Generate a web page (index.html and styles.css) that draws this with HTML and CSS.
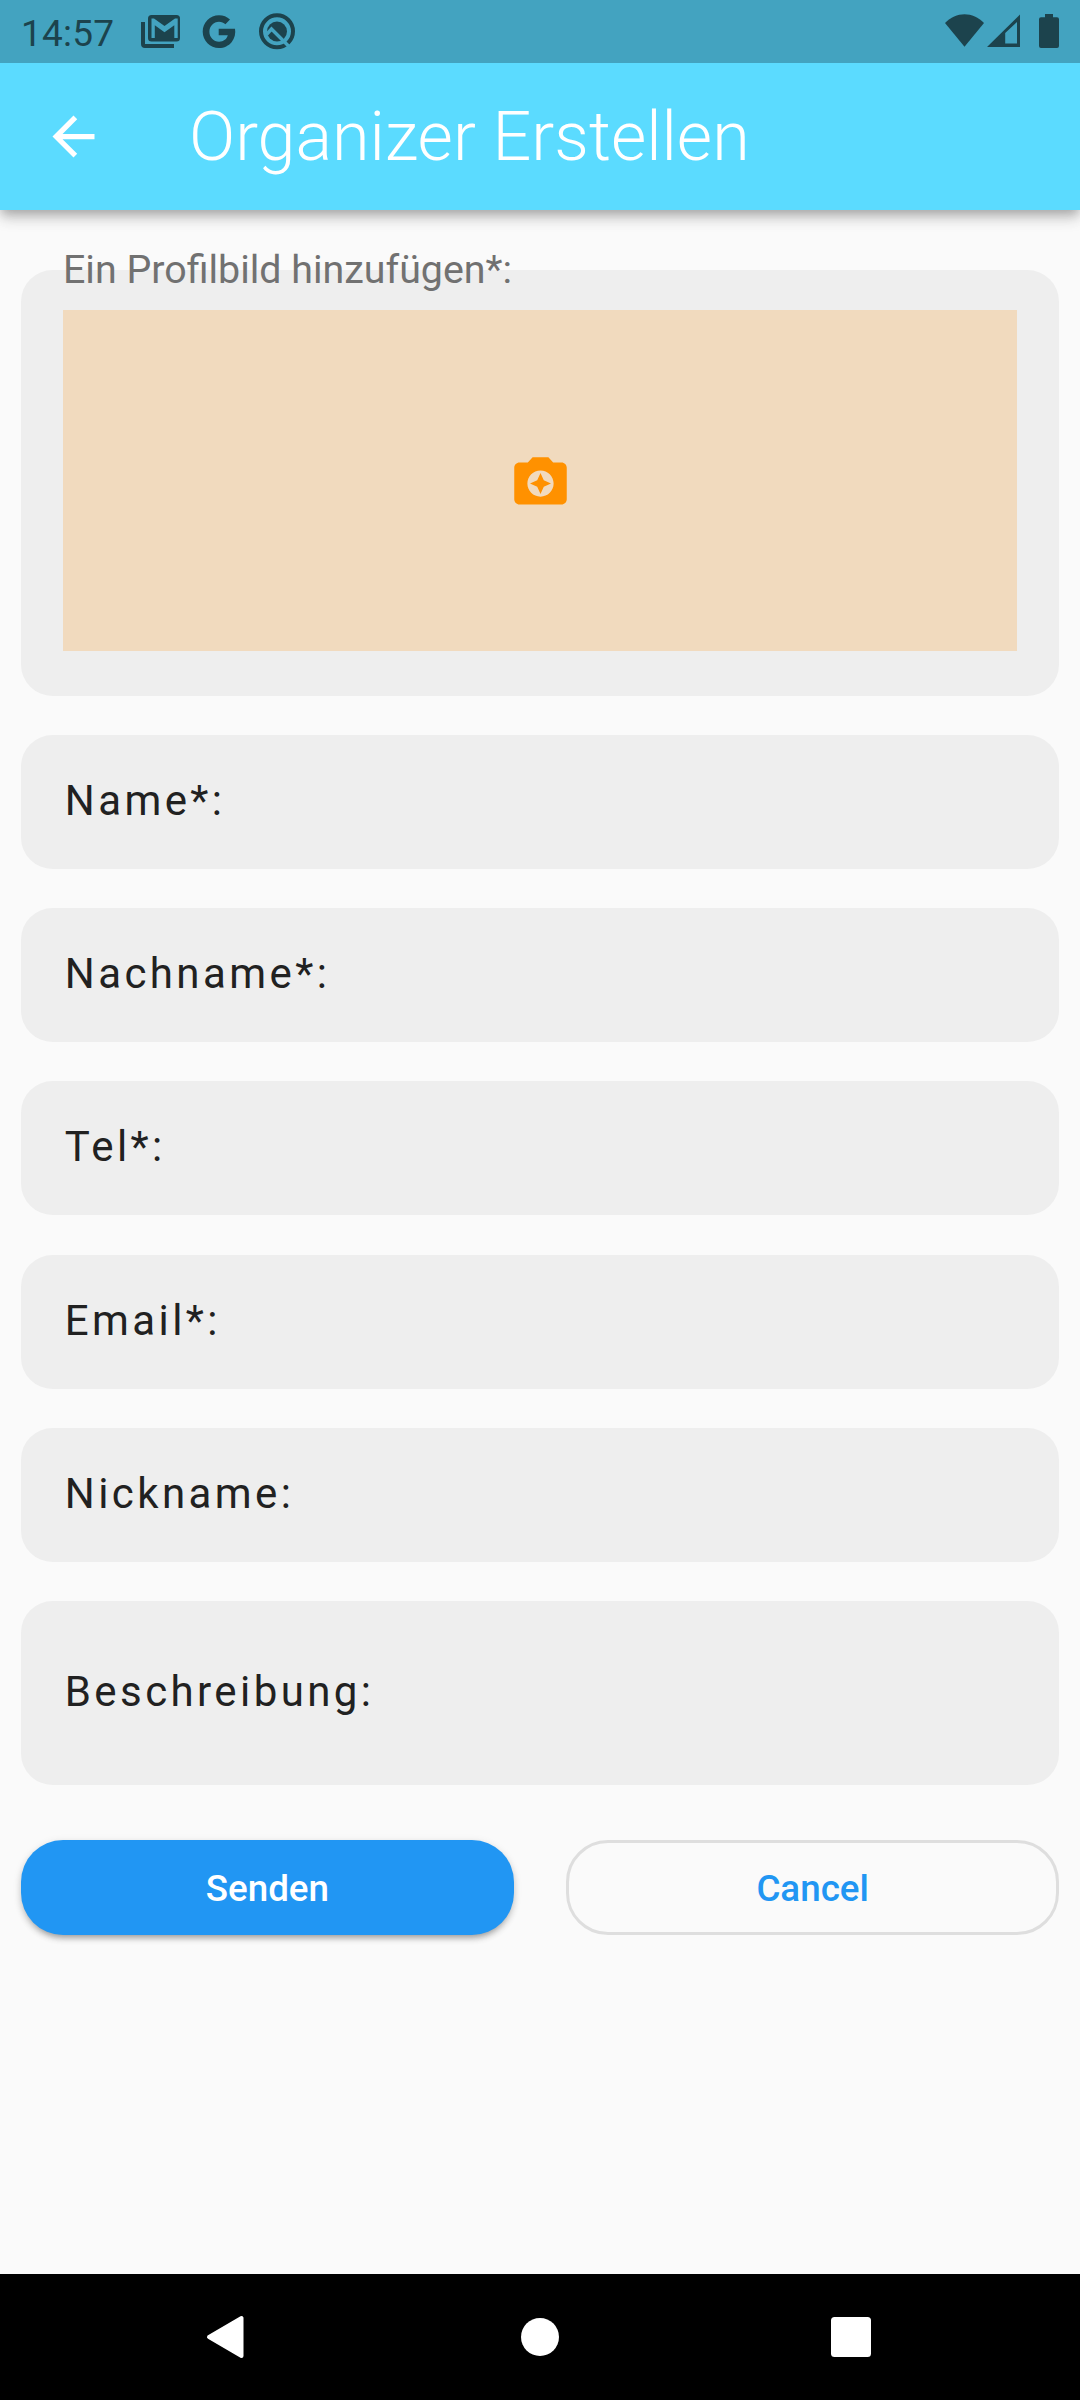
FILE: index.html
```html
<!DOCTYPE html>
<html lang="de">
<head>
<meta charset="utf-8">
<title>Organizer Erstellen</title>
<link rel="stylesheet" href="styles.css">
</head>
<body>
<div class="screen">
  <div class="status-bar">
    <span class="clock">14:57</span>
    <svg class="notif-icons" width="160" height="63" viewBox="0 0 160 63">
      <!-- mail stack -->
      <path d="M1 22h4v22h29v4H5a4 4 0 0 1-4-4z"/>
      <rect x="8" y="15" width="32" height="26.500" rx="3.500"/>
      <path class="cutout" d="M11.500 38V18.500h2.500l10.500 7.500L35 18.500h2.700V38H34.300V25.200L24.500 32.200 14.800 25.200V38z"/>
      <!-- G -->
      <path d="M78.700 28.800H95c.8 4.300-.2 9.600-3.400 13.400-3 3.500-7.300 5.800-12.600 5.800C70 48 62.700 40.700 62.700 31.700S70 15.300 79 15.300c4.300 0 8 1.500 11 4.200l-4.600 4.700c-1.700-1.600-3.900-2.500-6.400-2.500-5.400 0-9.600 4.500-9.600 10s4.200 10 9.600 10c4.800 0 7.900-2.700 8.800-6.400h-9.100z"/>
      <!-- circled search -->
      <circle class="ring" cx="137" cy="31.300" r="16"/>
      <circle cx="137" cy="31.500" r="10"/>
      <path class="handle" d="M126.500 34.500L131.500 29L149.500 47"/>
    </svg>
    <svg class="system-icons" width="120" height="63" viewBox="0 0 120 63">
      <path d="M6 23C17 11.300 34 11.300 45 23L25.500 46.700z"/>
      <path fill-rule="evenodd" d="M48 47L81 14.500V47zM66.200 33V43.500H78V22z"/>
      <path d="M106 14h8v3.300h4a2 2 0 0 1 2 2V46a2 2 0 0 1-2 2h-16a2 2 0 0 1-2-2V19.300a2 2 0 0 1 2-2h4z"/>
    </svg>
  </div>
  <header class="app-bar">
    <svg class="back" width="63" height="63" viewBox="0 0 24 24"><path d="M20 11H7.830l5.590-5.590L12 4l-8 8 8 8 1.410-1.410L7.830 13H20v-2z"/></svg>
    <h1 class="title">Organizer Erstellen</h1>
  </header>
  <main class="form">
    <section class="photo-card">
      <div class="photo-label">Ein Profilbild hinzufügen*:</div>
      <div class="photo-picker">
        <svg width="63" height="63" viewBox="0 0 24 24"><path d="M20 4h-3.170L15 2H9L7.170 4H4c-1.100 0-2 .9-2 2v12c0 1.100.9 2 2 2h16c1.100 0 2-.9 2-2V6c0-1.100-.9-2-2-2zm-8 13c-2.760 0-5-2.240-5-5s2.240-5 5-5 5 2.240 5 5-2.240 5-5 5z"/><path d="M12 8l-1.250 2.750L8 12l2.750 1.250L12 16l1.250-2.750L16 12l-2.750-1.250z"/></svg>
      </div>
    </section>
    <div class="field">Name*:</div>
    <div class="field">Nachname*:</div>
    <div class="field">Tel*:</div>
    <div class="field">Email*:</div>
    <div class="field">Nickname:</div>
    <div class="field field-tall">Beschreibung:</div>
    <div class="actions">
      <button class="btn btn-send">Senden</button>
      <button class="btn btn-cancel">Cancel</button>
    </div>
  </main>
  <nav class="nav-bar">
    <svg width="1080" height="126" viewBox="0 0 1080 126">
      <path class="nav-back" d="M209 63L241.500 44V82z"/>
      <circle cx="540" cy="63" r="19"/>
      <rect x="831" y="43" width="40" height="40" rx="3.500"/>
    </svg>
  </nav>
</div>
</body>
</html>
```
FILE: styles.css
```css
* { box-sizing: border-box; }
body {
  margin: 0;
  background: #fafafa;
  font-family: Roboto, "Liberation Sans", sans-serif;
}
.screen {
  display: flex;
  flex-direction: column;
  width: 1080px;
  height: 2400px;
}
.status-bar {
  position: relative;
  z-index: 1;
  display: flex;
  align-items: center;
  justify-content: space-between;
  height: 63px;
  padding: 0 21px;
  background: #43a3c0;
  color: #1c434d;
  fill: #1c434d;
}
.clock {
  width: 119px;
  font-size: 37px;
  line-height: 63px;
  padding-top: 3px;
  letter-spacing: .2px;
}
.notif-icons { margin-right: auto; }
.cutout { fill: #43a3c0; }
.ring { fill: none; stroke: #1c434d; stroke-width: 4; }
.handle { fill: none; stroke: #43a3c0; stroke-width: 3.4; }
.app-bar {
  display: flex;
  align-items: center;
  height: 147px;
  padding-left: 42px;
  background: #5bdbff;
  box-shadow: 0 5px 10px -2px rgba(0,0,0,.24), 0 10px 13px rgba(0,0,0,.11), 0 3px 20px rgba(0,0,0,.07);
}
.back { fill: #fff; }
.title {
  margin: 0 0 0 84px;
  font-size: 68.25px;
  font-weight: 300;
  line-height: 80px;
  color: #fff;
}
.form {
  flex: 1;
  display: flex;
  flex-direction: column;
  gap: 39.375px;
  padding: 60.25px 21px 0;
}
.photo-card {
  height: 425.25px;
  padding: 0 42px;
  border-radius: 31.5px;
  background: #eee;
}
.photo-label {
  height: 46px;
  margin-top: -23px;
  font-size: 39.375px;
  line-height: 46px;
  color: #717171;
}
.photo-picker {
  display: flex;
  align-items: center;
  justify-content: center;
  height: 341px;
  margin-top: 16.75px;
  padding-top: 5px;
  background: #f1dabe;
  fill: #ff9100;
}
.field {
  display: flex;
  align-items: center;
  height: 133.875px;
  padding: 0 42px 3px 43.75px;
  border-radius: 31.5px;
  background: #eee;
  color: #212121;
  font-size: 42px;
  letter-spacing: 3.42px;
}
.field-tall { height: 183.750px; }
.actions {
  display: grid;
  grid-template-columns: 1fr 1fr;
  gap: 52.500px;
  margin-top: 16px;
}
.btn {
  height: 94.500px;
  padding: 2px 0 0;
  border: 0;
  border-radius: 42px;
  font-family: inherit;
  font-size: 36.75px;
  font-weight: 500;
}
.btn-send {
  background: #2196f3;
  color: #fff;
  box-shadow: 0 7px 5px -5px rgba(0,0,0,.18), 0 4px 6px rgba(0,0,0,.16), 0 2px 10px rgba(0,0,0,.09);
}
.btn-cancel {
  border: 3px solid #dedede;
  background: transparent;
  color: #2196f3;
}
.nav-bar { height: 126px; background: #000; }
.nav-bar svg { display: block; fill: #fff; }
.nav-back { stroke: #fff; stroke-width: 4; stroke-linejoin: round; }
```
